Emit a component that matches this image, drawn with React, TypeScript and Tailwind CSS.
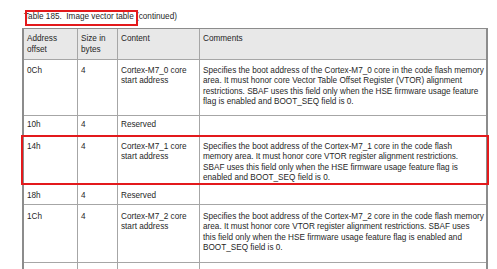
import React from "react";

type Row = {
  h: string;
  pt: string;
  off: string;
  size: string;
  content: string[];
  comments: string[];
};

const rows: Row[] = [
  {
    h: "h-[56px]",
    pt: "pt-[6px]",
    off: "0Ch",
    size: "4",
    content: ["Cortex-M7_0 core", "start address"],
    comments: [
      "Specifies the boot address of the Cortex-M7_0 core in the code flash memory",
      "area. It must honor core Vector Table Offset Register (VTOR) alignment",
      "restrictions. SBAF uses this field only when the HSE firmware usage feature",
      "flag is enabled and BOOT_SEQ field is 0.",
    ],
  },
  {
    h: "h-[21px]",
    pt: "pt-[4px]",
    off: "10h",
    size: "4",
    content: ["Reserved"],
    comments: [],
  },
  {
    h: "h-[48px]",
    pt: "pt-[5px]",
    off: "14h",
    size: "4",
    content: ["Cortex-M7_1 core", "start address"],
    comments: [
      "Specifies the boot address of the Cortex-M7_1 core in the code flash",
      "memory area. It must honor core VTOR register alignment restrictions.",
      "SBAF uses this field only when the HSE firmware usage feature flag is",
      "enabled and BOOT_SEQ field is 0.",
    ],
  },
  {
    h: "h-[20px]",
    pt: "pt-[6px]",
    off: "18h",
    size: "4",
    content: ["Reserved"],
    comments: [],
  },
  {
    h: "h-[58px]",
    pt: "pt-[7px]",
    off: "1Ch",
    size: "4",
    content: ["Cortex-M7_2 core", "start address"],
    comments: [
      "Specifies the boot address of the Cortex-M7_2 core in the code flash memory",
      "area. It must honor core VTOR register alignment restrictions. SBAF uses",
      "this field only when the HSE firmware usage feature flag is enabled and",
      "BOOT_SEQ field is 0.",
    ],
  },
  {
    h: "h-[20px]",
    pt: "pt-[6px]",
    off: "",
    size: "",
    content: [],
    comments: [],
  },
];

function Lines({ lines }: { lines: string[] }) {
  return (
    <>
      {lines.map((l, i) => (
        <div key={i} className="whitespace-nowrap">
          {l}
        </div>
      ))}
    </>
  );
}

export default function App() {
  return (
    <div className="relative w-[497px] h-[269px] overflow-hidden bg-white font-['Liberation_Sans',Arial,sans-serif] text-[8.2px] leading-[10.4px] text-[#1f1f1f]">
      <div className="h-[28px] pl-[24px] pt-[12px] whitespace-pre">
        Table 185.  Image vector table (continued)
      </div>
      <div className="ml-[22px] w-[466px] border-l-2 border-r-2 border-t border-[#8c8c8c]">
        <div className="flex h-[31px] bg-[#e8e8e8] border-b border-[#a6a6a6] leading-[11px]">
          <div className="w-[54px] shrink-0 border-r border-[#a6a6a6] pl-[3px] pt-[4px]">
            <Lines lines={["Address", "offset"]} />
          </div>
          <div className="w-[40px] shrink-0 border-r border-[#a6a6a6] pl-[3px] pt-[4px]">
            <Lines lines={["Size in", "bytes"]} />
          </div>
          <div className="w-[82px] shrink-0 border-r border-[#a6a6a6] pl-[3px] pt-[4px]">
            <Lines lines={["Content"]} />
          </div>
          <div className="flex-1 pl-[3px] pt-[4px]">
            <Lines lines={["Comments"]} />
          </div>
        </div>
        {rows.map((r, i) => (
          <div key={i} className={`flex ${r.h} border-b border-[#a6a6a6]`}>
            <div className={`w-[54px] shrink-0 border-r border-[#a6a6a6] pl-[3px] ${r.pt}`}>
              {r.off}
            </div>
            <div className={`w-[40px] shrink-0 border-r border-[#a6a6a6] pl-[3px] ${r.pt}`}>
              {r.size}
            </div>
            <div className={`w-[82px] shrink-0 border-r border-[#a6a6a6] pl-[3px] ${r.pt}`}>
              <Lines lines={r.content} />
            </div>
            <div className={`flex-1 pl-[3px] ${r.pt}`}>
              <Lines lines={r.comments} />
            </div>
          </div>
        ))}
      </div>
      <div className="absolute left-[25px] top-[10px] w-[113px] h-[16px] border-2 border-[#e3191c]" />
      <div className="absolute left-[21px] top-[135px] w-[468px] h-[50px] border-2 border-[#e3191c]" />
    </div>
  );
}
